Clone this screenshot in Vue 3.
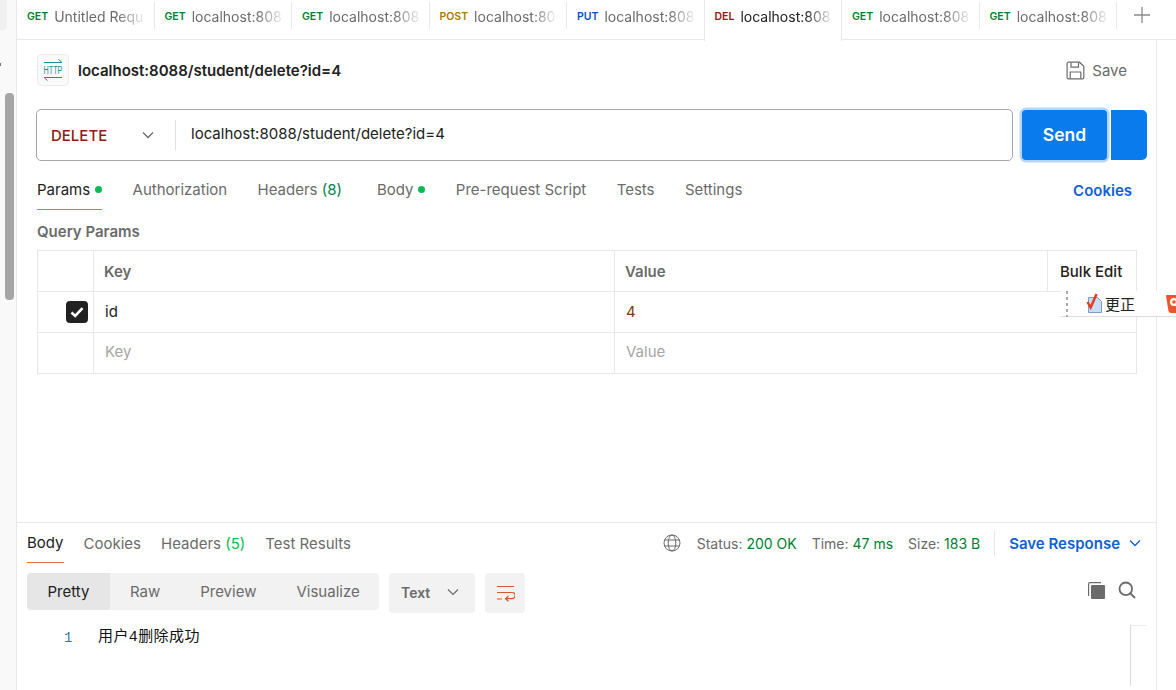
<script setup>
const tabs = [
  { m: 'GET', t: 'Untitled Requ', c: 'get' },
  { m: 'GET', t: 'localhost:808', c: 'get' },
  { m: 'GET', t: 'localhost:808', c: 'get' },
  { m: 'POST', t: 'localhost:80', c: 'post' },
  { m: 'PUT', t: 'localhost:808', c: 'put' },
  { m: 'DEL', t: 'localhost:808', c: 'del', active: true },
  { m: 'GET', t: 'localhost:808', c: 'get' },
  { m: 'GET', t: 'localhost:808', c: 'get' }
]
</script>

<template>
  <div class="app">
    <aside class="gutter">
      <div class="gutter-top"></div>
      <div class="gutter-mark"></div>
      <div class="thumb"></div>
    </aside>
    <div class="column">
      <nav class="tabbar">
        <div v-for="(tab, i) in tabs" :key="i" class="tab" :class="{ active: tab.active }">
          <span class="method" :class="tab.c">{{ tab.m }}</span>
          <span class="tab-title">{{ tab.t }}</span>
        </div>
        <div class="add">
          <svg width="16" height="16" viewBox="0 0 16 16"><path d="M8 0v16M0 8h16" stroke="#8a8a8a" stroke-width="1.3" fill="none"/></svg>
        </div>
      </nav>
      <div class="work">
        <main class="main">
          <section class="request">
            <header class="title-row">
              <div class="http-icon">
                <svg width="22" height="24" viewBox="0 0 22 24">
                  <path d="M2 4.500h18M16.500 1.500l3.500 3" stroke="#1f8a99" stroke-width="1" fill="none"/>
                  <text transform="translate(1.500 16) scale(.66 1)" font-size="11" fill="#1f8a99" font-family="Liberation Sans, sans-serif">HTTP</text>
                  <path d="M2 19.500h18M2 19.500l3.500 3" stroke="#1f8a99" stroke-width="1" fill="none"/>
                </svg>
              </div>
              <h1 class="req-name">localhost:8088/student/delete?id=4</h1>
              <div class="save">
                <svg width="19" height="19" viewBox="0 0 19 19" fill="none" stroke="#6b6b6b" stroke-width="1.2">
                  <path d="M2.500 1.200h11l4.300 4v11.200a1.400 1.400 0 0 1-1.400 1.400H2.500a1.400 1.400 0 0 1-1.400-1.400V2.600a1.400 1.400 0 0 1 1.400-1.400z"/>
                  <path d="M5 1.500v4.700h7.500V1.500M4.200 17.600v-6.600h10.600v6.600"/>
                </svg>
                <span>Save</span>
              </div>
            </header>

            <div class="send-row">
              <div class="url-box">
                <div class="verb">
                  <span>DELETE</span>
                  <svg width="14" height="14" viewBox="0 0 14 14"><path d="M2 4.500l5 5 5-5" stroke="#6b6b6b" stroke-width="1.3" fill="none"/></svg>
                </div>
                <div class="url">localhost:8088/student/delete?id=4</div>
              </div>
              <div class="send-wrap">
                <button class="send">Send</button>
                <span class="send-more"></span>
              </div>
            </div>

            <div class="req-tabs">
              <span class="rt active">Params<i class="dot"></i></span>
              <span class="rt">Authorization</span>
              <span class="rt wide">Headers <em>(8)</em></span>
              <span class="rt">Body<i class="dot"></i></span>
              <span class="rt">Pre-request Script</span>
              <span class="rt">Tests</span>
              <span class="rt">Settings</span>
              <span class="cookies">Cookies</span>
            </div>

            <div class="qp">Query Params</div>
            <div class="table">
              <div class="row head">
                <div class="c check"></div>
                <div class="c key">Key</div>
                <div class="c val">Value</div>
                <div class="c bulk">Bulk Edit</div>
              </div>
              <div class="row">
                <div class="c check">
                  <span class="box">
                    <svg width="16" height="16" viewBox="0 0 16 16"><path d="M2.500 8.500l3.700 3.500L13.500 4.200" stroke="#fff" stroke-width="2.600" fill="none"/></svg>
                  </span>
                </div>
                <div class="c key data">id</div>
                <div class="c val data brown">4</div>
              </div>
              <div class="row last">
                <div class="c check"></div>
                <div class="c key ph">Key</div>
                <div class="c val ph">Value</div>
              </div>
            </div>
          </section>

          <section class="response">
            <div class="res-head">
              <span class="rs active">Body</span>
              <span class="rs">Cookies</span>
              <span class="rs">Headers <em>(5)</em></span>
              <span class="rs">Test Results</span>
              <div class="meta">
                <svg class="globe" width="18" height="18" viewBox="0 0 18 18" fill="none" stroke="#6b6b6b" stroke-width="1">
                  <circle cx="9" cy="9" r="8"/>
                  <ellipse cx="9" cy="9" rx="3.800" ry="8"/>
                  <path d="M1.600 6h14.800M1.600 12h14.800"/>
                </svg>
                <span class="m">Status: <b>200 OK</b></span>
                <span class="m">Time: <b>47 ms</b></span>
                <span class="m last-m">Size: <b>183 B</b></span>
                <span class="sep"></span>
                <span class="save-res">Save Response</span>
                <svg width="12" height="12" viewBox="0 0 12 12"><path d="M1 3.500l5 5 5-5" stroke="#0f5fd6" stroke-width="1.3" fill="none"/></svg>
              </div>
            </div>

            <div class="tools">
              <div class="seg">
                <span class="on">Pretty</span>
                <span>Raw</span>
                <span>Preview</span>
                <span>Visualize</span>
              </div>
              <div class="fmt">
                <span>Text</span>
                <svg width="12" height="12" viewBox="0 0 12 12"><path d="M1 3.500l5 5 5-5" stroke="#6b6b6b" stroke-width="1.2" fill="none"/></svg>
              </div>
              <div class="wrap-btn">
                <svg width="19" height="17" viewBox="0 0 19 17" fill="none" stroke="#d9532c" stroke-width="1.2">
                  <path d="M1 1.500h17M1 7.500h15a2.600 2.600 0 0 1 0 6.200h-6M12.500 11l-3 2.700 3 2.600M1 14h5"/>
                </svg>
              </div>
              <div class="right-tools">
                <svg width="19" height="19" viewBox="0 0 19 19">
                  <path d="M1 15V3a2 2 0 0 1 2-2h11v1.200H3A.8.8 0 0 0 2.200 3v12z" fill="#6b6b6b"/>
                  <rect x="4" y="4" width="14" height="14" rx="1" fill="#6b6b6b"/>
                </svg>
                <svg width="18" height="18" viewBox="0 0 18 18" fill="none" stroke="#6b6b6b" stroke-width="1.800">
                  <circle cx="7.800" cy="7.800" r="6.300"/>
                  <path d="M12.500 12.500L17 17"/>
                </svg>
              </div>
            </div>

            <div class="code">
              <span class="ln">1</span>
              <span class="txt">用户4删除成功</span>
              <div class="code-rail"></div>
            </div>
          </section>
        </main>
        <div class="right-gutter"></div>
      </div>
    </div>

    <div class="float-bar">
      <span class="grip"></span>
      <svg class="doc" width="18" height="21" viewBox="0 0 18 21">
        <path d="M2.500 4.500h9l4 4v11h-13z" fill="#c6dcf7" stroke="#7d9cc4" stroke-width="1"/>
        <path d="M1.500 9l3.200 5.500L10.500 1" stroke="#e8391d" stroke-width="2.400" fill="none"/>
      </svg>
      <span class="fix">更正</span>
      <svg class="shield" width="12" height="20" viewBox="0 0 12 20">
        <path d="M0 2q0-1 1-1h11v18H5q-2 0-2.500-2z" fill="#f0562a"/>
        <circle cx="8" cy="8" r="4" fill="#fff"/>
        <circle cx="8" cy="8" r="1.800" fill="#f0562a"/>
      </svg>
    </div>
  </div>
</template>

<style>
html, body { margin: 0; padding: 0; background: #fff; }
</style>

<style scoped>
.app {
  position: relative;
  display: flex;
  width: 1176px;
  height: 690px;
  overflow: hidden;
  background: #fff;
  font-family: Inter, "Noto Sans CJK SC", sans-serif;
  font-size: 15px;
  color: #6b6b6b;
}
.gutter {
  width: 16px;
  flex: none;
  background: #f9f9f9;
  border-right: 1px solid #e8e8e8;
  display: flex;
  flex-direction: column;
}
.gutter-top { width: 7px; height: 30px; background: #f0f0f0; border-bottom-right-radius: 4px; }
.gutter-mark { width: 1px; height: 3px; margin-top: 33px; background: #777; }
.thumb { width: 9px; height: 207px; margin: 27px 0 0 5px; background: #a6a6a6; border-radius: 4px; }
.column { flex: 1; min-width: 0; display: flex; flex-direction: column; }

.tabbar { height: 40px; flex: none; display: flex; box-sizing: border-box; border-bottom: 1px solid #e8e8e8; }
.tab {
  width: 137.500px;
  flex: none;
  box-sizing: border-box;
  height: 27px;
  margin-top: 2px;
  padding: 1px 12px 0 10px;
  display: flex;
  align-items: center;
  gap: 6px;
  border-right: 1px solid #e8e8e8;
  white-space: nowrap;
  font-size: 14px;
}
.tab.active {
  height: 41px;
  margin-top: 0;
  padding-bottom: 10px;
  background: #fff;
  color: #212121;
  border-left: 1px solid #e8e8e8;
  border-right: 1px solid #e8e8e8;
  margin-left: -1px;
  width: 138.500px;
}
.tab-title {
  -webkit-mask-image: linear-gradient(to right, #000 72%, rgba(0,0,0,.12) 100%);
  mask-image: linear-gradient(to right, #000 72%, rgba(0,0,0,.12) 100%);
}
.method { font-size: 10.500px; font-weight: 600; }
.get { color: #007f31; }
.post { color: #ad7a03; }
.put { color: #0053b8; }
.del { color: #8e1a10; }
.add { flex: 1; display: flex; padding: 7px 0 0 17px; box-sizing: border-box; }

.work { flex: 1; min-height: 0; display: flex; }
.main { width: 1139px; flex: none; border-right: 1px solid #e8e8e8; display: flex; flex-direction: column; }
.right-gutter { flex: 1; }

.request { height: 482px; flex: none; box-sizing: border-box; padding: 14px 9px 0 20px; }
.title-row { height: 32px; display: flex; align-items: center; }
.http-icon {
  width: 32px;
  height: 32px;
  box-sizing: border-box;
  border: 1px solid #ededed;
  border-radius: 4px;
  background: #fafafa;
  display: flex;
  align-items: center;
  justify-content: center;
}
.req-name { margin: 0 0 0 9px; font-size: 15px; font-weight: 600; color: #212121; flex: 1; }
.save { display: flex; align-items: center; gap: 7px; margin-right: 20px; }

.send-row { display: flex; margin-top: 23px; height: 52px; margin-left: -1px; }
.url-box {
  flex: 1;
  box-sizing: border-box;
  border: 1px solid #a6a6a6;
  border-radius: 5px;
  display: flex;
  align-items: center;
}
.verb {
  width: 139px;
  height: 30px;
  box-sizing: border-box;
  padding: 0 20px 0 14px;
  display: flex;
  align-items: center;
  justify-content: space-between;
  border-right: 1px solid #e0e0e0;
  color: #8e1a10;
  font-weight: 500;
}
.url { padding: 0 0 4px 15px; color: #212121; }
.send-wrap { display: flex; margin-left: 9px; height: 50px; margin-top: 1px; }
.send {
  width: 85px;
  height: 50px;
  border: 0;
  border-radius: 4px;
  padding: 0 0 2px;
  background: #097bed;
  color: #fff;
  font: 600 17.500px Inter, sans-serif;
  box-shadow: 0 0 0 2.500px #b7d5f8;
}
.send-more { width: 36px; margin-left: 4px; background: #097bed; border-radius: 0 5px 5px 0; }

.req-tabs { display: flex; align-items: flex-start; margin-top: 20px; height: 29px; padding-right: 15px; }
.rt { display: inline-flex; align-items: center; height: 28px; margin-right: 30.400px; padding-bottom: 11px; box-sizing: border-box; white-space: pre; }
.rt.active { color: #212121; border-bottom: 1px solid #f26b3a; height: 29px; }
.rt.wide { margin-right: 35px; }
.rt em, .rs em { font-style: normal; color: #007f4f; }
.dot { width: 7px; height: 7px; border-radius: 50%; background: #0cbb52; margin-left: 5px; }
.cookies { margin-left: auto; color: #0f5fd6; font-weight: 600; }

.qp { margin-top: 12px; font-weight: 600; color: #6b6b6b; }
.table { margin-top: 9px; margin-right: 10px; border: 1px solid #e8e8e8; border-bottom: 0; }
.row { display: flex; height: 41px; border-bottom: 1px solid #e8e8e8; box-sizing: border-box; }
.c { display: flex; align-items: center; box-sizing: border-box; }
.check { width: 56px; border-right: 1px solid #e8e8e8; justify-content: flex-end; padding-right: 5px; }
.key { width: 521px; border-right: 1px solid #e8e8e8; padding-left: 10px; }
.val { flex: 1; padding-left: 10px; }
.head .key, .head .val { font-weight: 600; }
.head .val { border-right: 1px solid #e8e8e8; }
.bulk { width: 88px; padding-left: 12px; color: #212121; font-weight: 500; }
.data { color: #212121; padding: 0 0 1px 11px; }
.brown { color: #7a3e00; }
.ph { color: #a6a6a6; padding: 0 0 3px 11px; }
.box {
  width: 22px;
  height: 22px;
  border-radius: 4px;
  background: #212121;
  display: flex;
  align-items: center;
  justify-content: center;
}

.response { flex: 1; border-top: 1px solid #e8e8e8; padding: 0 10px; position: relative; }
.res-head { display: flex; align-items: flex-start; height: 40px; }
.rs { height: 40px; box-sizing: border-box; display: inline-flex; align-items: center; margin-right: 20px; white-space: pre; }
.rs.active { color: #212121; border-bottom: 1px solid #f26b3a; }
.rs em { color: #0cbb52; }
.meta { margin-left: auto; display: flex; align-items: center; height: 40px; font-size: 14px; padding-right: 5px; }
.globe { margin-right: 16px; }
.m { margin-right: 15px; white-space: pre; }
.m.last-m { margin-right: 14px; }
.m b { font-weight: 400; color: #007f31; }
.sep { width: 1px; height: 25px; background: #e8e8e8; margin-right: 14px; }
.save-res { color: #0f5fd6; font-size: 15px; font-weight: 600; margin-right: 9px; }

.tools { display: flex; margin-top: 10px; align-items: flex-start; }
.seg { display: flex; height: 37px; width: 352px; border-radius: 4px; overflow: hidden; background: #f2f2f2; margin-right: 10px; }
.seg span { display: flex; align-items: center; padding: 0 20px; }
.seg .on { background: #e6e6e6; color: #212121; padding: 0 20.500px; }
.fmt {
  width: 86px;
  height: 40px;
  box-sizing: border-box;
  padding: 0 16px 2px 12px;
  background: #f2f2f2;
  border-radius: 4px;
  display: flex;
  align-items: center;
  justify-content: space-between;
  font-size: 14px;
  font-weight: 600;
  margin-right: 10px;
}
.wrap-btn { width: 40px; height: 40px; background: #f2f2f2; border-radius: 4px; display: flex; align-items: center; justify-content: center; }
.right-tools { margin-left: auto; display: flex; gap: 12px; padding: 8px 0 0; margin-right: 10px; }

.code { position: relative; height: 60px; display: flex; padding-top: 14px; box-sizing: border-box; }
.ln { width: 71px; padding-left: 37px; box-sizing: border-box; color: #2b7bb5; font: 14px "Liberation Mono", monospace; line-height: 22px; }
.txt { color: #111; font: 15px "Liberation Mono", "Noto Sans CJK SC", monospace; line-height: 22px; letter-spacing: 0.400px; }
.code-rail { position: absolute; left: 1103px; top: 12px; width: 15px; height: 60px; border-left: 1px solid #dcdcdc; border-top: 1px solid #ececec; }

.float-bar {
  position: absolute;
  left: 1061px;
  top: 291px;
  width: 115px;
  height: 26px;
  background: #fff;
  border-bottom: 1px solid #ddd;
  box-sizing: border-box;
  display: flex;
  align-items: center;
  color: #222;
  font-family: "Noto Sans CJK SC", sans-serif;
  white-space: nowrap;
}
.grip { width: 2px; height: 26px; margin-left: 5px; background: repeating-linear-gradient(to bottom, #aaa 0 3px, transparent 3px 6px); flex: none; }
.doc { margin-left: 18px; flex: none; }
.fix { font-size: 15px; margin-left: 1px; flex: none; }
.shield { margin-left: 31px; flex: none; }
</style>
